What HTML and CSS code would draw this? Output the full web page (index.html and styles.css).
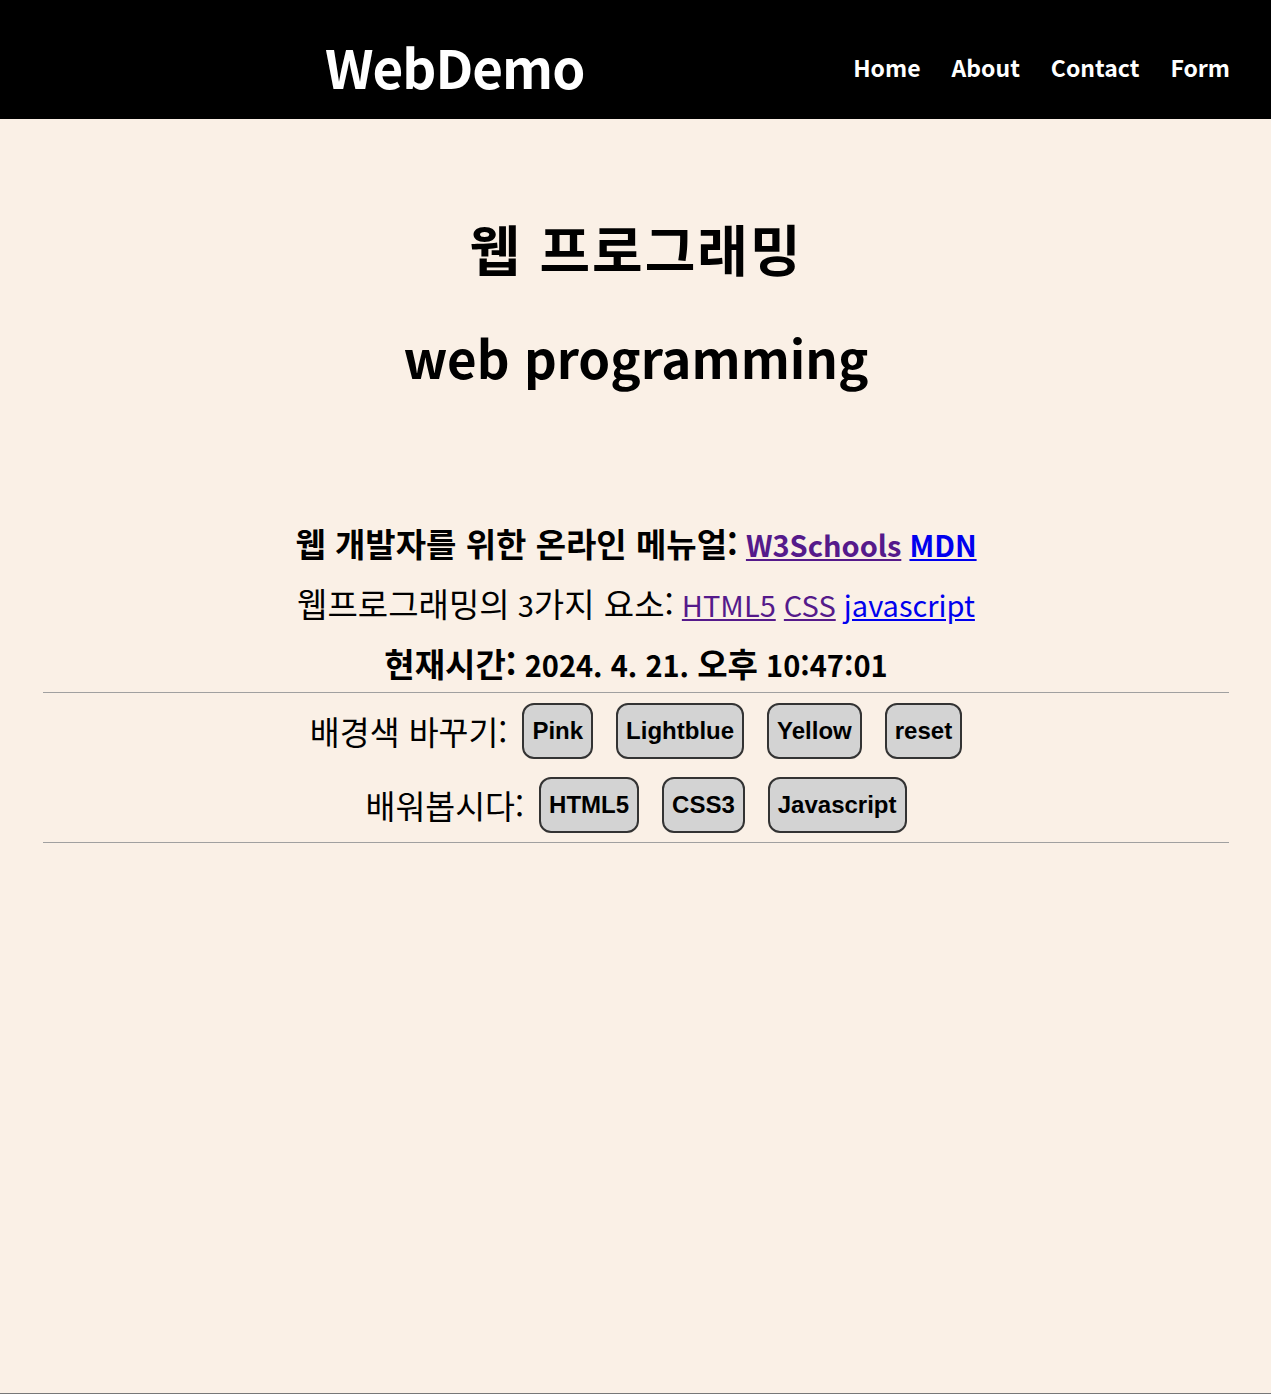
FILE: index.html
```html
<!DOCTYPE html>
<html lang="ko">
<head>
<meta charset="utf-8">
<title>WebDemo</title>
<link rel="stylesheet" href="styles.css">
</head>
<body>
<header class="topbar">
  <div class="logo">WebDemo</div>
  <nav class="nav">
    <a href="#">Home</a>
    <a href="#">About</a>
    <a href="#">Contact</a>
    <a href="#">Form</a>
  </nav>
</header>
<main class="content">
  <h1 class="title-ko">웹 프로그래밍</h1>
  <h1 class="title-en">web programming</h1>
  <div class="info">
    <p class="line bold"><span class="ko">웹 개발자를 위한 온라인 메뉴얼:</span> <a class="visited" href="#">W3Schools</a> <a class="link" href="#">MDN</a></p>
    <p class="line"><span class="ko">웹프로그래밍의</span> 3<span class="ko">가지 요소:</span> <a class="visited" href="#">HTML5</a> <a class="visited" href="#">CSS</a> <a class="link" href="#">javascript</a></p>
    <p class="line bold"><span class="ko">현재시간:</span> 2024. 4. 21. <span class="ko">오후</span> 10:47:01</p>
  </div>
  <hr class="rule">
  <div class="controls">
    <div class="row">
      <span class="label ko">배경색 바꾸기:</span>
      <div class="btns">
        <button class="btn">Pink</button>
        <button class="btn">Lightblue</button>
        <button class="btn">Yellow</button>
        <button class="btn">reset</button>
      </div>
    </div>
    <div class="row">
      <span class="label ko">배워봅시다:</span>
      <div class="btns">
        <button class="btn">HTML5</button>
        <button class="btn">CSS3</button>
        <button class="btn">Javascript</button>
      </div>
    </div>
  </div>
  <hr class="rule">
</main>
<footer class="foot"></footer>
</body>
</html>
```
FILE: styles.css
```css
html, body {
  margin: 0;
  padding: 0;
}
body {
  background: #faf0e6;
  color: #000;
  font-family: "Noto Sans CJK KR", "Noto Sans", sans-serif;
  min-height: 100vh;
  display: flex;
  flex-direction: column;
}
.topbar {
  background: #000;
  height: 119px;
  display: flex;
  align-items: center;
  justify-content: space-between;
  padding: 14px 41px 0 325px;
  box-sizing: border-box;
}
.logo {
  color: #fff;
  font-weight: 700;
  font-size: 53px;
  line-height: 1;
  letter-spacing: -1px;
}
.nav {
  display: flex;
  gap: 31px;
}
.nav a {
  color: #fff;
  text-decoration: none;
  font-weight: 700;
  font-size: 23px;
}
.content {
  padding: 0 42px 0 43px;
  text-align: center;
}
.title-ko {
  margin: 93px 0 0;
  font-size: 55px;
  line-height: 70px;
  font-weight: 700;
  letter-spacing: 2px;
}
.title-en {
  margin: 40px 0 0;
  font-size: 51px;
  line-height: 70px;
  font-weight: 700;
}
.info {
  margin-top: 124px;
  display: flex;
  flex-direction: column;
  gap: 4px;
}
.line {
  margin: 0;
  font-size: 29px;
  line-height: 56px;
}
.ko {
  font-size: 33px;
  line-height: 1;
}
.bold {
  font-weight: 700;
}
.visited {
  color: #551a8b;
}
.link {
  color: #0000ee;
}
.rule {
  margin: 0;
  border: 0;
  border-top: 1px solid #a0a0a0;
  height: 0;
}
.controls {
  display: flex;
  flex-direction: column;
  gap: 18px;
  padding: 10px 0 9px;
}
.row {
  display: flex;
  justify-content: center;
  align-items: center;
  gap: 15px;
}
.label {
  font-size: 32.5px;
}
.btns {
  display: flex;
  gap: 23px;
}
.btn {
  font-family: "Liberation Sans", Arial, sans-serif;
  font-weight: 700;
  font-size: 24px;
  background: #d3d3d3;
  color: #000;
  border: 2px solid #333;
  border-radius: 12px;
  padding: 12px 8px;
  line-height: 28px;
}
.foot {
  margin-top: auto;
  border-top: 1px solid #777;
}
```
